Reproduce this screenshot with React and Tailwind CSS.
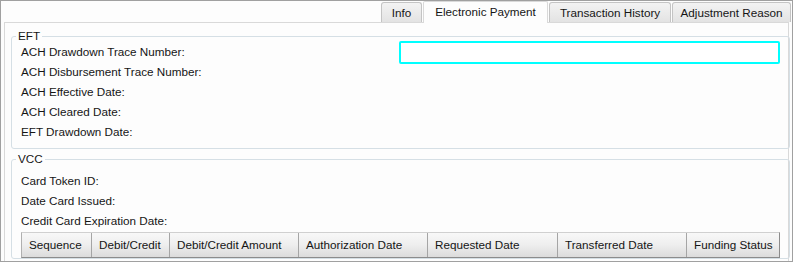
import React from 'react'

const tabs = [
  { label: 'Info', w: 'w-[41px]' },
  { label: 'Electronic Payment', w: 'w-[125px]', active: true },
  { label: 'Transaction History', w: 'w-[122px]' },
  { label: 'Adjustment Reason', w: 'w-[119px]' },
]

const eftFields = [
  'ACH Disbursement Trace Number:',
  'ACH Effective Date:',
  'ACH Cleared Date:',
  'EFT Drawdown Date:',
]

const vccFields = ['Card Token ID:', 'Date Card Issued:', 'Credit Card Expiration Date:']

const columns = [
  { label: 'Sequence', w: 'w-[70px]' },
  { label: 'Debit/Credit', w: 'w-[78px]' },
  { label: 'Debit/Credit Amount', w: 'w-[129px]' },
  { label: 'Authorization Date', w: 'w-[129px]' },
  { label: 'Requested Date', w: 'w-[130px]' },
  { label: 'Transferred Date', w: 'w-[129px]' },
  { label: 'Funding Status', w: 'flex-1' },
]

function Tab({ label, w, active }) {
  if (active) {
    return (
      <div className={`${w} relative z-10 -mb-px flex h-[22px] items-center justify-center rounded-t-[2px] border border-b-0 border-[#d9d9d9] bg-[#fdfdfd] pb-[1px]`}>
        {label}
      </div>
    )
  }
  return (
    <div className={`${w} flex h-[20px] items-center justify-center rounded-t-[3px] border border-b-0 border-[#c4c4c4] bg-gradient-to-b from-[#f3f3f3] to-[#e3e3e3]`}>
      {label}
    </div>
  )
}

function Group({ title, className = '', children }) {
  return (
    <fieldset className={`ml-[6px] mr-[3px] rounded-[3px] border border-[#d5dfe5] px-[9px] ${className}`}>
      <legend className="-ml-[5px] px-[2px] leading-[16px]">{title}</legend>
      {children}
    </fieldset>
  )
}

export default function App() {
  return (
    <div
      className="h-[262px] w-[793px] overflow-hidden border border-[#a0a0a0] bg-[#fdfdfd] text-[11.7px] text-[#151515]"
      style={{ fontFamily: '"Liberation Sans", Arial, sans-serif' }}
    >
      <div className="flex h-[21px] items-end justify-end gap-[1px] pr-[1px]">
        {tabs.map((t) => (
          <Tab key={t.label} {...t} />
        ))}
      </div>

      <div className="mx-[3px] h-[260px] border border-[#d9d9d9] bg-[#fdfdfd]">
        <Group title="EFT" className="mt-[5px] pb-[6px]">
          <div className="-mt-[2px] flex h-[20px] items-center">
            <span className="w-[378px] shrink-0">ACH Drawdown Trace Number:</span>
            <input className="h-[23px] w-[381px] rounded-[2px] border-2 border-[#00ffff] bg-white outline-none" />
          </div>
          {eftFields.map((f) => (
            <div key={f} className="flex h-[20px] items-center">
              {f}
            </div>
          ))}
        </Group>

        <Group title="VCC" className="mt-[2px] pt-[4px]">
          {vccFields.map((f) => (
            <div key={f} className="flex h-[20px] items-center">
              {f}
            </div>
          ))}
          <div className="mt-[1px] flex h-[26px] w-[759px] border-b border-r border-[#8c8c8c] border-t border-t-[#d0d0d0] border-l border-l-[#b0b0b0]">
            {columns.map((c, i) => (
              <div
                key={c.label}
                className={`${c.w} flex items-center bg-gradient-to-b from-[#f8f8f8] via-[#eeeeee] to-[#dcdcdc] pl-[7px] ${i < columns.length - 1 ? 'border-r border-[#a5a5a5]' : ''}`}
              >
                {c.label}
              </div>
            ))}
          </div>
        </Group>
      </div>
    </div>
  )
}
